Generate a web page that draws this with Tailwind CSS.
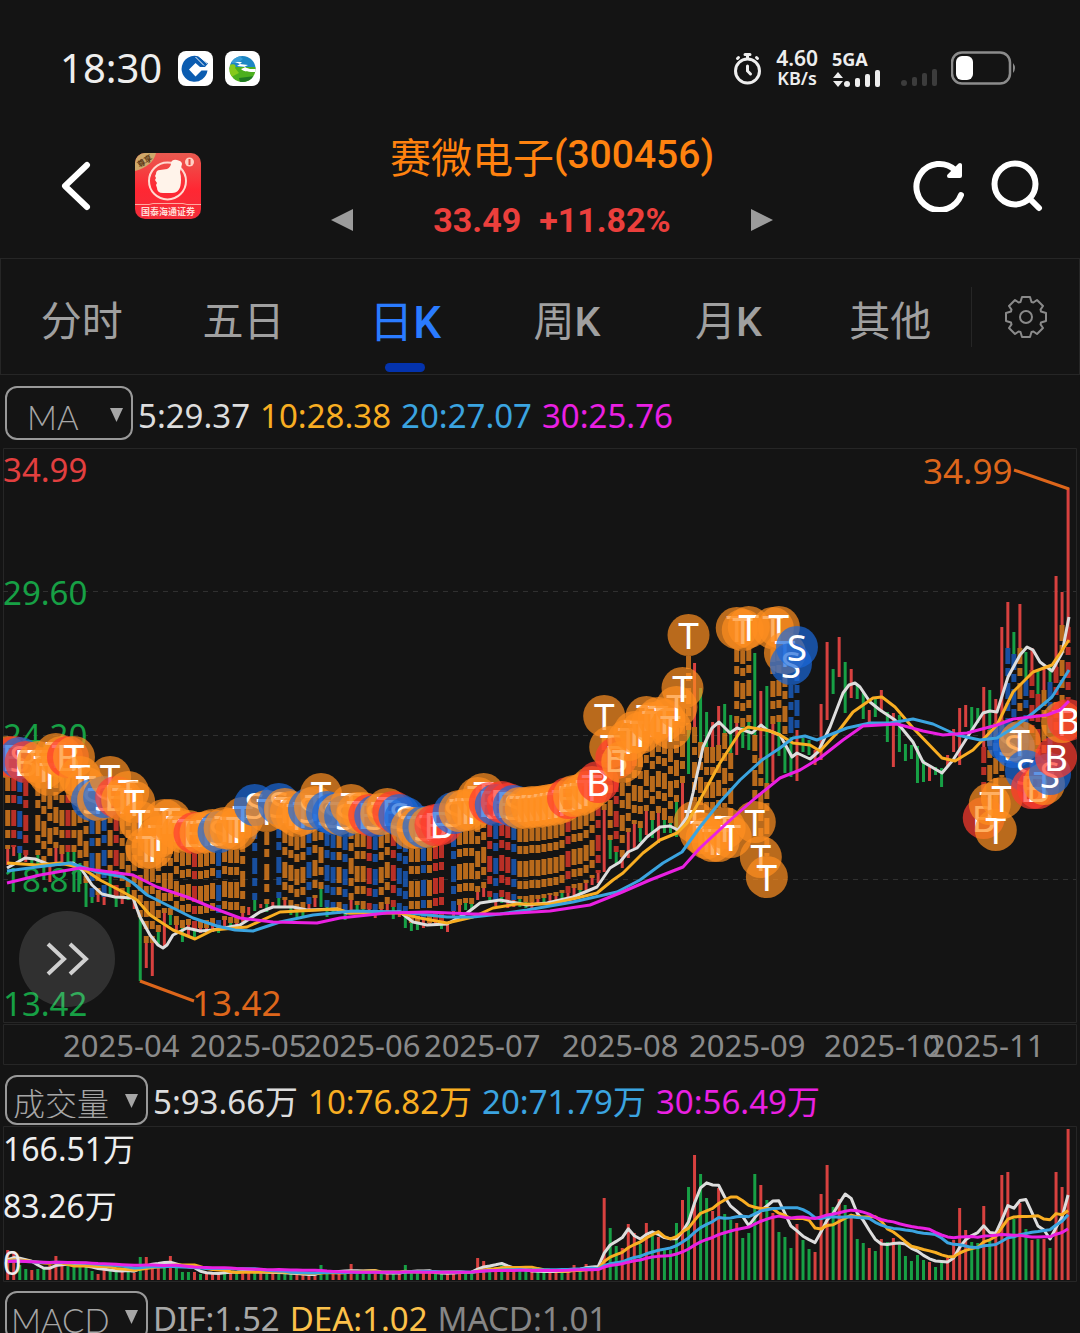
<!DOCTYPE html>
<html lang="zh-CN">

<head>
  <meta charset="UTF-8" />
  <meta name="viewport" content="width=device-width, initial-scale=1.0" />
  <title>赛微电子(300456)</title>
  <script src="https://cdn.jsdelivr.net/npm/@tailwindcss/browser@4"></script>
</head>

<body class="h-screen overflow-hidden bg-[#141414] font-['Noto_Sans_CJK_SC',sans-serif] text-[#dddddd]">

  <!-- Status bar -->
  <div class="flex h-[136px] items-center justify-between pr-[63px] pl-[60px]">
    <div class="flex items-center gap-3">
      <span class="mr-1 font-['Noto_Sans',sans-serif] text-[40px] leading-none text-[#eeeeee]">18:30</span>
      <svg class="size-[35px]" viewBox="0 0 35 35">
        <rect width="35" height="35" rx="8" fill="#fff" />
        <path fill="#0b5cb0" fill-rule="evenodd" d="M20 5.200A13 13 0 1 0 29.500 19.500H23.500L17.500 25.500L11 18.500L17.500 12L22 16H27L30 12.500Z" />
        <path d="M21 5l8 7.500M17.500 6l8.500 8.500" stroke="#fff" stroke-width="1" fill="none" />
      </svg>
      <svg class="size-[35px]" viewBox="0 0 35 35">
        <rect width="35" height="35" rx="8" fill="#fff" />
        <clipPath id="globe"><circle cx="17.500" cy="18" r="13" /></clipPath>
        <g clip-path="url(#globe)">
          <rect width="35" height="18" fill="#1c86c4" />
          <rect y="16" width="35" height="19" fill="#4caf1e" />
          <path d="M4 9l9-5 5 4-5 4H4z" fill="#3a9ed6" />
          <path d="M4 14c5-2 8 0 6 3l4 5-10 5z" fill="#86c91c" />
          <path d="M14 27l16-2v6H15z" fill="#1f7a22" />
          <path d="M10 11l7 0-2 2 8 1-4 2 6 2h6v3c-7 0-12 0-15-3l5-2-9-1 3-2z" fill="#fff" />
        </g>
      </svg>
    </div>
    <div class="flex items-center text-[#eeeeee]">
      <svg class="mr-[14px] h-[33px] w-[29px]" viewBox="0 0 29 33" fill="none" stroke="#eee" stroke-width="3" stroke-linecap="round">
        <circle cx="14.500" cy="19" r="12" />
        <path d="M12 2.500h5M14.500 3v3M4.500 6.500l1-1M24.500 6.500l-1-1" />
        <path d="M14.500 14v5l3 3" />
      </svg>
      <div class="mr-[14px] text-center font-['Noto_Sans',sans-serif] font-semibold">
        <div class="text-[21px] leading-[20px]">4.60</div>
        <div class="text-[18px] leading-[20px]">KB/s</div>
      </div>
      <div class="mr-5">
        <div class="font-['Noto_Sans',sans-serif] text-[18px] leading-[20px] font-bold">5GA</div>
        <svg class="h-[19px] w-[49px]" viewBox="0 0 49 19" fill="#eee">
          <path d="M1 9l5-6 5 6zM1 12h10l-5 6z" />
          <circle cx="15" cy="15" r="3" />
          <rect x="23" y="9" width="5" height="9" rx="2" />
          <rect x="33" y="5" width="5" height="13" rx="2" />
          <rect x="43" y="1" width="5" height="17" rx="2" />
        </svg>
      </div>
      <svg class="mt-[18px] mr-[13px] h-[19px] w-[37px]" viewBox="0 0 37 19" fill="#3c3c3c">
        <circle cx="3" cy="15" r="3" />
        <rect x="11" y="9" width="5" height="9" rx="2" />
        <rect x="21" y="5" width="5" height="13" rx="2" />
        <rect x="31" y="1" width="5" height="17" rx="2" />
      </svg>
      <svg class="h-[34px] w-[66px]" viewBox="0 0 66 34">
        <rect x="1" y="1.500" width="58" height="31" rx="10" fill="none" stroke="#8c8c8c" stroke-width="2.500" />
        <rect x="5" y="5" width="17" height="24" rx="6" fill="#fff" />
        <path d="M62 12q4 5 0 10z" fill="#8c8c8c" />
      </svg>
    </div>
  </div>

  <!-- Stock header -->
  <header class="flex h-[122px] items-start pr-[37px] pl-[61px]">
    <button aria-label="返回" class="mt-6 mr-[44px]">
      <svg class="h-[52px] w-[30px]" viewBox="0 0 30 52" fill="none" stroke="#fff" stroke-width="6" stroke-linecap="round" stroke-linejoin="round">
        <path d="M26 5L4 26L26 47" />
      </svg>
    </button>
    <svg class="mt-[17px] size-[66px]" viewBox="0 0 66 66">
      <defs>
        <linearGradient id="logoRed" x1="0" y1="0" x2="0" y2="1">
          <stop offset="0" stop-color="#e95a50" />
          <stop offset=".55" stop-color="#ff2733" />
          <stop offset="1" stop-color="#f22d3a" />
        </linearGradient>
        <clipPath id="logoClip"><rect width="66" height="66" rx="10" /></clipPath>
      </defs>
      <g clip-path="url(#logoClip)">
        <rect width="66" height="66" fill="url(#logoRed)" />
        <path d="M0 0H21Q18 13 0 18z" fill="#cfa86a" />
        <text x="2" y="12" font-size="8" font-weight="700" fill="#5b3716" transform="rotate(-32 8 9)">尊享</text>
        <circle cx="32.500" cy="28" r="18.500" fill="none" stroke="#ffd9d0" stroke-width="2" />
        <path d="M21 21q0-4 4-4l7-1q4-2 4-6 1-4 6-3 5 1 5 4-1 4-2 8 1 3 1 8 0 13-9 13H28q-6 0-6-5l-1-3 1-2-2-3 1-2-1-2z" fill="#fff3ea" />
        <circle cx="54.500" cy="9" r="4.500" fill="#ffd0c4" />
        <path d="M54.500 6v6" stroke="#e5473f" stroke-width="2" />
        <path d="M0 51.500h14l4-1h30l4 1h14" fill="none" stroke="#ffaaa0" stroke-width="1" />
        <text x="33" y="62" text-anchor="middle" font-size="9" font-weight="700" fill="#ffdcd6">国泰海通证券</text>
      </g>
    </svg>
    <div class="flex flex-1 flex-col items-center pr-[10px]">
      <h1 class="flex h-[38px] items-center text-[41px] leading-none text-[#ff820f]">赛微电子<span class="font-['Roboto'] text-[39px] font-medium">(300456)</span></h1>
      <div class="mt-[26px] flex h-[40px] w-[442px] items-center justify-between">
        <button aria-label="上一只">
          <svg class="size-[22px]" viewBox="0 0 22 22" fill="#9c9c9c"><path d="M22 0v22L0 11z" /></svg>
        </button>
        <div class="flex gap-[18px] font-['Roboto'] text-[34px] leading-none font-bold text-[#eb3f3c]">
          <span>33.49</span><span>+11.82%</span>
        </div>
        <button aria-label="下一只">
          <svg class="size-[22px]" viewBox="0 0 22 22" fill="#9c9c9c"><path d="M0 0v22L22 11z" /></svg>
        </button>
      </div>
    </div>
    <button aria-label="刷新" class="mt-6 mr-[26px]">
      <svg class="size-[52px]" viewBox="0 0 52 52" fill="none" stroke="#fff" stroke-width="6" stroke-linecap="round" stroke-linejoin="round">
        <path d="M48 35A23 23 0 1 1 42 10" />
        <path d="M47 5V16H36Z" fill="#fff" stroke-width="4" />
      </svg>
    </button>
    <button aria-label="搜索" class="mt-6">
      <svg class="size-[52px]" viewBox="0 0 52 52" fill="none" stroke="#fff" stroke-width="6" stroke-linecap="round">
        <circle cx="24" cy="24" r="20.500" />
        <path d="M39 39L48 48" />
      </svg>
    </button>
  </header>

  <!-- Period tabs -->
  <nav class="flex h-[117px] items-center border border-[#262626] text-[41px] text-[#a0a0a0]">
    <div class="flex h-full flex-1 items-center">
      <button class="h-full flex-1 pt-1">分时</button>
      <button class="h-full flex-1 pt-1">五日</button>
      <button class="relative h-full flex-1 pt-1 text-[44px] text-[#2a7bff]">日<span class="font-['Roboto'] leading-none font-medium">K</span>
        <span class="absolute bottom-[2px] left-1/2 h-[9px] w-10 -translate-x-1/2 rounded-full bg-[#0433ad]"></span>
      </button>
      <button class="h-full flex-1 pt-1">周<span class="font-['Roboto'] leading-none font-medium">K</span></button>
      <button class="h-full flex-1 pt-1">月<span class="font-['Roboto'] leading-none font-medium">K</span></button>
      <button class="h-full flex-1 pt-1">其他</button>
    </div>
    <button aria-label="设置" class="flex h-[60px] w-[108px] items-center justify-center border-l border-[#262626]">
      <svg class="size-[44px]" viewBox="-22 -22 44 44" fill="none" stroke="#8a8a8a" stroke-width="2" stroke-linejoin="round">
        <path d="M-5.500-15 L-4-20 4-20 5.500-15 7.400-14.500 11-17 17-11 14.500-7.400 15-5.500 20-4 20 4 15 5.500 14.500 7.400 17 11 11 17 7.400 14.500 5.500 15 4 20-4 20-5.500 15-7.400 14.500-11 17-17 11-14.500 7.400-15 5.500-20 4-20-4-15-5.500-14.500-7.400-17-11-11-17-7.400-14.500Z" />
        <circle r="6" />
      </svg>
    </button>
  </nav>

  <!-- MA legend -->
  <div class="flex h-[72px] items-center pt-1 pl-[5px] font-['Noto_Sans','Noto_Sans_CJK_SC',sans-serif] text-[33px] leading-none">
    <div class="relative mr-[5px]">
      <select aria-label="主图指标" class="h-[54px] w-32 appearance-none rounded-xl border-2 border-[#999999] bg-transparent pt-2 pl-[20px] font-['Lato'] font-light text-[#a6a6a6]">
        <option>MA</option>
        <option>BOLL</option>
      </select>
      <svg class="pointer-events-none absolute top-[22px] right-[10px] h-[14px] w-[13px]" viewBox="0 0 13 14" fill="#a6a6a6"><path d="M0 0h13L6.500 14z" /></svg>
    </div>
    <div class="flex gap-[10px] pt-1">
      <span class="text-[#dddddd]">5:29.37</span>
      <span class="text-[#f9ae22]">10:28.38</span>
      <span class="text-[#3ba4e0]">20:27.07</span>
      <span class="text-[#ea20e2]">30:25.76</span>
    </div>
  </div>

  <!-- Price chart -->
  <div class="relative font-['Noto_Sans','Noto_Sans_CJK_SC',sans-serif]">
    <svg id="price" class="block h-auto w-full" viewBox="0 447 1080 618"></svg>
    <button aria-label="展开" class="absolute top-[464px] left-[19px] flex size-24 items-center justify-center rounded-full bg-white/12">
      <svg class="h-[36px] w-[44px]" viewBox="0 0 44 36" fill="none" stroke="#d0d0d0" stroke-width="4">
        <path d="M3 3L19 18L3 33M25 3L41 18L25 33" />
      </svg>
    </button>
  </div>

  <!-- Volume legend -->
  <div class="flex h-[61px] items-center pt-2 pl-[5px] font-['Noto_Sans','Noto_Sans_CJK_SC',sans-serif] text-[33px] leading-none">
    <div class="relative mr-[5px]">
      <select aria-label="成交量指标" class="h-[50px] w-[143px] appearance-none rounded-xl border-2 border-[#999999] bg-transparent pt-1 pl-[6px] font-['Noto_Sans_CJK_SC'] text-[32px] font-light text-[#a6a6a6]">
        <option>成交量</option>
      </select>
      <svg class="pointer-events-none absolute top-[19px] right-[10px] h-[14px] w-[13px]" viewBox="0 0 13 14" fill="#a6a6a6"><path d="M0 0h13L6.500 14z" /></svg>
    </div>
    <div class="flex gap-[10px] pt-1">
      <span class="text-[#dddddd]">5:93.66万</span>
      <span class="text-[#f9ae22]">10:76.82万</span>
      <span class="text-[#3ba4e0]">20:71.79万</span>
      <span class="text-[#ea20e2]">30:56.49万</span>
    </div>
  </div>

  <div class="font-['Noto_Sans','Noto_Sans_CJK_SC',sans-serif]">
    <svg id="volume" class="block h-auto w-full" viewBox="0 1126 1080 156"></svg>
  </div>

  <!-- MACD legend -->
  <div class="flex h-[68px] items-center pl-[5px] font-['Noto_Sans','Noto_Sans_CJK_SC',sans-serif] text-[33px] leading-none">
    <div class="relative mr-[5px]">
      <select aria-label="副图指标" class="h-[50px] w-[143px] appearance-none rounded-xl border-2 border-[#999999] bg-transparent pt-2 pl-[4px] font-['Lato'] font-light text-[#a6a6a6]">
        <option>MACD</option>
        <option>KDJ</option>
      </select>
      <svg class="pointer-events-none absolute top-[19px] right-[10px] h-[14px] w-[13px]" viewBox="0 0 13 14" fill="#a6a6a6"><path d="M0 0h13L6.500 14z" /></svg>
    </div>
    <div class="flex gap-[10px] pt-1">
      <span class="text-[#a8a8a8]">DIF:1.52</span>
      <span class="text-[#fcc14a]">DEA:1.02</span>
      <span class="text-[#868686]">MACD:1.01</span>
    </div>
  </div>

  <script>
    const RED = "#d8413f", GREEN = "#17a045";
    const MARK = { T: "#ff8f1f", B: "#ff3b2e", S: "#1a68da" };
    const LINES = ["#dddddd", "#f9ae22", "#3ba4e0", "#ea20e2"];
    const xOf = (i) => 7.7 + i * 6.025;

    // one entry per day: direction, high, low, marker type, marker centre
    const days = `
r 849 865 T 757|r 847 856 B 757|g 853 862 S 758|r 855 862 B 762|g 858 864|g 855 864 T 762|g 863 880 T 768|r 863 882 T 775|r 848 865 T 754|r 854 865 T 757
g 852 864 B 757|g 852 892 T 757|g 863 884 T 777|g 883 907 T 788|g 897 903 S 800|r 895 902 T 800|r 897 905 S 797|g 875 895 T 777|g 897 907 B 797|r 897 904 T 800
g 887 900 T 792|r 898 909 T 802|g 917 981 T 822|r 943 968 T 848|r 943 976 T 848|g 932 945 T 837|r 913 948 T 820|g 915 925 T 820|r 925 930 T 828|g 928 942 T 832
r 925 935 T 831|g 930 937 B 833|r 928 933 T 833|r 928 933 T 832|r 924 932 T 830|g 930 933 S 832|r 920 930 T 828|g 923 928 T 829|r 923 928 T 829|r 913 922 T 818
r 907 915|g 900 911 S 805|r 904 908|g 904 912 T 811|r 902 907|g 898 907 S 804|r 900 907 T 809|g 907 915 T 812|g 910 917 T 816|g 910 917 T 814
r 904 912 S 809|r 898 907 T 807|g 889 907 T 794|g 907 917 S 812|g 908 912 S 814|r 909 914 T 814|g 912 920 S 816|r 900 912 T 805|g 905 913 T 813|g 909 914 T 813
r 909 914 B 815|r 910 918 S 816|r 909 914 T 814|r 904 911 T 809|g 907 919 B 812|r 913 917 S 815|g 915 928 S 818|g 923 931 T 828|g 923 930 T 828|r 920 928 S 827
r 923 926 T 827|r 920 925 B 825|g 922 929 B 824|r 922 932|r 911 916 S 813|r 905 913 T 811|g 903 910 T 810|g 904 910 T 810|r 892 900 T 798|r 888 897 T 794
g 897 903 B 803|r 901 906 S 805|g 897 903 B 802|r 900 908 B 804|r 900 907 S 806|g 899 907 T 808|g 902 908 T 808|r 902 908 T 807|r 899 904 T 807|g 898 905 T 806
r 895 902 T 805|r 896 902 T 804|g 893 900 T 802|r 893 898 B 798|r 888 897 T 796|g 890 893 T 795|r 883 890 T 792|r 878 885 T 787|r 873 883 B 782|r 810 872 T 716
g 840 859 T 747|g 852 863 B 758|r 857 868 T 762|r 832 858 T 740|r 824 848 T 732|g 828 842 T 733|r 811 835 T 717|g 820 838 T 723|r 813 843 T 718|g 820 833 T 720
g 823 833 T 728|g 802 837 T 707|r 783 827 T 688|g 730 774 T 635|r 663 727 T 822|g 688 742 T 833|g 712 747 T 838|r 722 747 T 841|r 706 745 T 841|g 704 733 T 828
g 715 753 T 837|r 723 755 T 628|g 727 748 T 630|g 722 750 T 627|g 653 735 T 822|r 691 758 T 857|g 686 783 T 877|r 724 782 T 628|g 722 756 T 627|g 743 773 T 653
g 737 777 S 664|r 730 781 S 647|g 738 752|g 740 755|r 750 765|r 704 760|r 642 720|g 669 694|r 637 677|g 662 713
r 669 698|g 684 699|g 693 719|r 710 723|g 698 717|r 690 710|g 712 742|r 713 767|g 715 752|g 744 761
g 745 759|g 746 783|g 760 782|r 767 781|g 767 775|g 768 787|r 755 767|r 729 752|r 708 765|r 705 727
g 707 732|g 708 723|r 687 747 B 818|g 690 730 T 804|r 699 723 T 830|r 627 720 T 798|r 602 648 S 742|g 632 654 S 747|r 604 648 T 742|g 652 680 S 771
r 648 670 B 788|g 670 694 B 788|r 668 690 T 784|g 665 682 S 774|r 576 667 B 757|r 592 625 T 722|r 488 627 B 720`
      .trim().split(/[|\n]/).map((row) => {
        const [dir, high, low, mark, my] = row.split(" ");
        return { dir, high: +high, low: +low, mark, my: +my };
      });

    const averages = [
      "7,868 25,858 35,859 50,865 73,863 82,870 92,885 102,894 115,897 133,898 140,917 150,935 158,945 163,948 167,945 173,935 187,928 200,931 213,930 240,925 260,912 273,907 293,907 307,910 337,909 347,913 373,912 400,912 413,922 427,925 447,924 467,913 480,903 500,900 517,903 527,905 547,903 573,897 597,887 610,868 620,862 628,852 637,848 647,837 660,827 670,826 678,830 687,817 693,793 703,747 712,728 719,722 730,733 737,728 752,733 761,725 767,730 780,735 792,757 797,753 810,759 818,752 830,727 843,693 849,685 855,683 860,687 870,702 880,710 895,720 913,742 923,762 942,773 953,760 970,733 983,713 990,711 997,712 1008,677 1020,655 1027,647 1033,650 1040,662 1052,671 1062,653 1069,617",
      "7,863 37,865 60,863 82,868 100,880 123,892 137,900 150,915 173,930 195,939 213,930 247,927 280,912 337,909 350,913 400,913 420,918 447,923 473,917 493,908 517,904 550,904 577,898 597,893 613,880 623,873 643,853 660,840 677,833 687,823 700,800 720,763 740,732 748,727 770,731 780,735 793,743 810,745 820,751 837,733 853,712 873,698 882,697 895,707 913,728 942,758 955,761 973,750 997,725 1013,692 1033,672 1052,665 1069,640",
      "7,871 37,867 70,863 97,872 123,877 133,883 147,895 167,905 193,918 217,926 235,930 253,931 280,922 313,915 353,911 400,912 447,917 473,917 500,914 527,910 573,902 617,892 640,880 663,863 682,852 700,827 720,802 740,780 762,760 780,748 793,738 805,736 817,740 847,728 870,723 890,723 913,719 933,724 957,735 980,740 997,738 1013,728 1033,713 1052,697 1069,670",
      "7,883 40,875 80,868 110,872 133,875 157,887 187,897 213,908 240,918 273,922 317,923 340,918 387,913 427,912 473,914 500,914 550,911 590,905 620,893 650,880 683,867 700,848 727,823 753,800 780,778 800,770 820,758 843,740 863,726 897,724 923,731 943,735 967,733 997,725 1013,719 1047,715 1060,710 1069,701",
    ];

    const line = (points, color) =>
      `<polyline points="${points}" fill="none" stroke="${color}" stroke-width="3" stroke-linejoin="round" />`;

    function drawPrice() {
      let out = `
        <g fill="none" stroke="#262626" stroke-width="1">
          <path d="M3.500 448.500H1076.500V1022.500H3.500Z M3.500 1024.500H1076.500V1064.500H3.500Z" />
          <path d="M3 591.500H1076M3 735.500H1076M3 879.500H1076" stroke="#303030" stroke-dasharray="5 5" />
        </g>
        <g font-size="33" fill="${GREEN}">
          <text x="3" y="482" fill="#e23f3f">34.99</text>
          <text x="3" y="605">29.60</text>
          <text x="3" y="748">24.20</text>
          <text x="3" y="892">18.81</text>
          <text x="3" y="1016">13.42</text>
        </g>`;

      let stems = "", marks = "";
      days.forEach((d, i) => {
        const x = xOf(i);
        out += `<rect x="${x - 1.5}" y="${d.high}" width="3" height="${d.low - d.high}" fill="${d.dir === "r" ? RED : GREEN}" />`;
        if (!d.mark) return;
        const above = d.my < d.high;
        const from = above ? d.my + 21 : d.low;
        const to = above ? d.high : d.my - 21;
        if (to > from) {
          stems += `<line x1="${x}" x2="${x}" y1="${from}" y2="${to}" stroke="${MARK[d.mark]}" stroke-dashoffset="${above ? 3 : 0}" />`;
        }
        marks += `<circle cx="${x}" cy="${d.my}" r="21" fill="${MARK[d.mark]}" fill-opacity=".7" />
          <text x="${x}" y="${d.my + 14}">${d.mark}</text>`;
      });

      out += `<g stroke-width="5" stroke-dasharray="16 4 8 7" opacity=".7">${stems}</g>
        <clipPath id="plot"><path d="M3 447H1077V1022H3Z" /></clipPath>
        <g clip-path="url(#plot)" font-size="37" fill="#fff" text-anchor="middle">${marks}</g>`;
      averages.forEach((points, i) => (out += line(points, LINES[i])));

      out += `<path d="M1014 470L1069 489M140 981L194 1001" fill="none" stroke="#dd661b" stroke-width="3" />
        <g fill="#dd661b" font-size="35">
          <text x="923" y="484">34.99</text>
          <text x="192" y="1016">13.42</text>
        </g>`;

      const months = { "2025-04": 63, "2025-05": 190, "2025-06": 304, "2025-07": 424, "2025-08": 562, "2025-09": 689, "2025-10": 824, "2025-11": 928 };
      out += `<g fill="#8a8a8a" font-size="31">`;
      for (const [label, x] of Object.entries(months)) out += `<text x="${x}" y="1057">${label}</text>`;
      out += `</g>`;
      document.getElementById("price").innerHTML = out;
    }

    // bar heights, r = up day, g = down day
    const volumes = `r30 r28 g15 g11 r10 g11 g12 r15 r24 r14 g14 g14 g14 g14 g9 r6 r11 g10 g10 r8 g9 r7 g23 r23 r17 r13 g12 r24 g14 g8
g8 r8 g6 r6 r6 r7 g11 r9 g7 r9 r9 g7 r8 g6 r8 g8 g6 g6 r5 r5 r5 r7 g15 g8 r7 r6 g9 r16 g8 g6
g7 r10 g6 r6 g7 r6 g15 g9 g8 r7 r7 g7 g6 r7 r8 r9 g7 g8 r22 r19 g14 r13 g15 r9 r9 g9 g9 r9 g8 g8
r8 r9 g9 r10 r15 g11 r16 r13 r12 r82 g52 g34 r32 r56 r47 g36 r57 g45 r43 g31 g30 g57 r80 g93 r125 g106 g82 r69 r92 g66
g60 r57 g42 g47 g106 r95 g80 r67 g48 g43 g32 r56 g40 g31 r28 r86 r115 g73 r81 g75 r64 g41 g37 r32 g29 r41 g38 r42 g35 g24
g19 g25 g20 r18 g13 g17 r22 r40 r72 r50 g38 g37 r74 g39 r46 r105 r108 g61 r77 g51 r40 g41 r41 g32 r108 r93 r151`.split(/\s+/);

    function drawVolume() {
      const base = 1280;
      const heights = volumes.map((v) => +v.slice(1));
      const padded = Array(30).fill(18).concat(heights);
      let out = `<path d="M3.500 1126.500H1076.500V1281.500H3.500Z" fill="none" stroke="#262626" />`;
      volumes.forEach((v, i) => {
        out += `<rect x="${xOf(i) - 1.5}" y="${base - heights[i]}" width="3" height="${heights[i]}" fill="${v[0] === "r" ? RED : GREEN}" />`;
      });
      [5, 10, 20, 30].forEach((n, k) => {
        const points = heights.map((_, i) => {
          const span = padded.slice(i + 31 - n, i + 31);
          return `${xOf(i)},${base - span.reduce((a, b) => a + b) / n}`;
        });
        out += line(points.join(" "), LINES[k]);
      });
      out += `<g font-size="32" fill="#eeeeee">
          <text x="3" y="1161">166.51万</text>
          <text x="3" y="1218">83.26万</text>
          <text x="3" y="1275">0</text>
        </g>`;
      document.getElementById("volume").innerHTML = out;
    }

    drawPrice();
    drawVolume();
  </script>
</body>

</html>
